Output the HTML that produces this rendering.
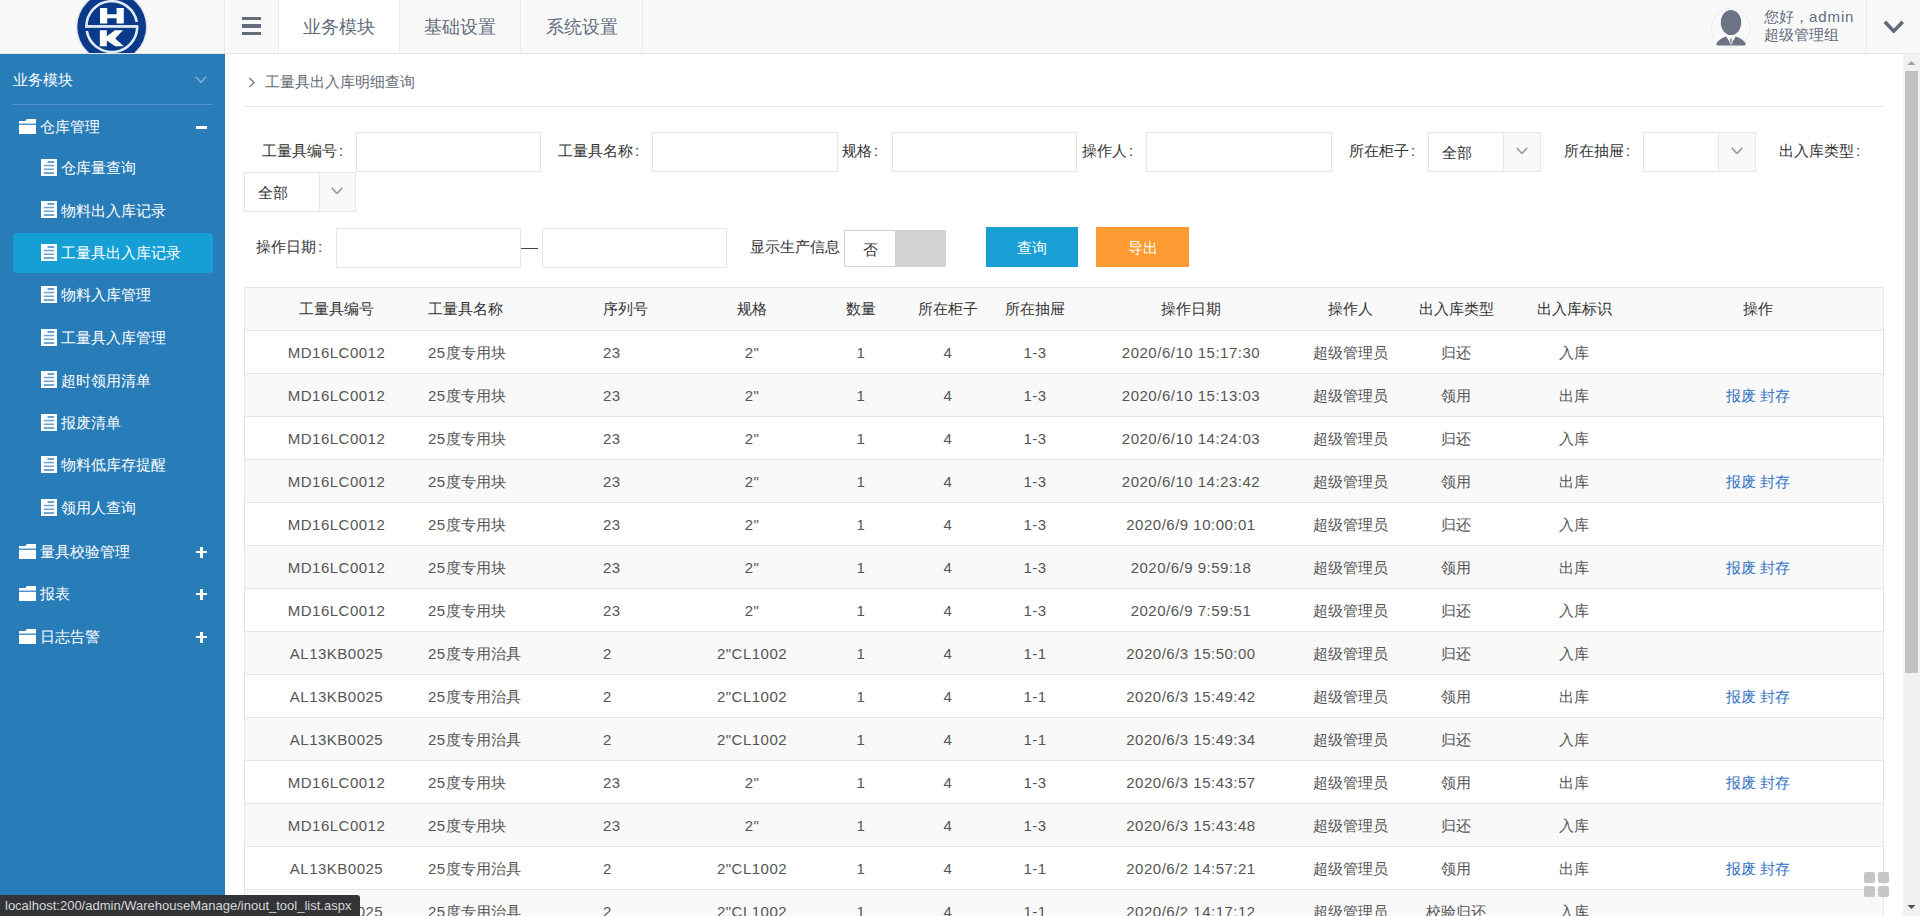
<!DOCTYPE html><html><head><meta charset="utf-8"><style>
*{box-sizing:border-box;margin:0;padding:0}
html,body{width:1920px;height:916px;overflow:hidden;background:#fff;font-family:"Liberation Sans",sans-serif;font-size:15px;color:#333}
.a{position:absolute;white-space:nowrap}
#top{position:absolute;left:0;top:0;width:1920px;height:54px;background:#f9f9f9;border-bottom:1px solid #e6e6e6}
.vsep{position:absolute;top:0;width:1px;height:53px;background:#ebebeb}
.tab{position:absolute;top:1px;height:53px;line-height:53px;font-size:18px;color:#646c7d;text-align:center}
#side{position:absolute;left:0;top:54px;width:225px;height:862px;background:#287cb8}
.mi{position:absolute;margin-top:1px;white-space:nowrap;font-size:15px;line-height:20px;color:#fff}
#sb{position:absolute;left:1903px;top:54px;width:17px;height:862px;background:#f1f1f1}
.lbl{position:absolute;white-space:nowrap;color:#333;font-size:15px;line-height:20px}
.inp{position:absolute;border:1px solid #e6e6e6;background:#fff;height:40px}
.sel{position:absolute;border:1px solid #e6e6e6;background:#fff;height:40px}
.sel .arr{position:absolute;right:0;top:0;width:36px;height:38px;background:#f9f9f9;border-left:1px solid #e6e6e6}
.row{position:absolute;left:244px;width:1640px;height:43px;border-left:1px solid #e6e6e6;border-right:1px solid #e6e6e6;border-bottom:1px solid #e6e6e6}
.c{position:absolute;top:1px;height:42px;line-height:42px;white-space:nowrap;color:#555}
.ls{letter-spacing:0.5px}
.cc{width:300px;text-align:center}
.h .c{color:#333;top:0}
.lk{color:#3372c4}
.co{margin-left:2px}
</style></head><body><div id="top">
<div class="vsep" style="left:224px"></div>
<div class="vsep" style="left:278px"></div>
<div class="vsep" style="left:399px"></div>
<div class="vsep" style="left:520px"></div>
<div class="vsep" style="left:642px"></div>
<div class="vsep" style="left:1866px"></div>
<div class="a" style="left:279px;top:0;width:120px;height:53px;background:#fff"></div>
<div class="tab" style="left:279px;width:120px">业务模块</div>
<div class="tab" style="left:400px;width:120px">基础设置</div>
<div class="tab" style="left:521px;width:121px">系统设置</div>
<div class="a" style="left:242px;top:16.5px;width:19px;height:3.5px;background:#646c7d"></div>
<div class="a" style="left:242px;top:24px;width:19px;height:3.5px;background:#646c7d"></div>
<div class="a" style="left:242px;top:31.5px;width:19px;height:3.5px;background:#646c7d"></div>
<svg class="a" style="left:0;top:0" width="224" height="53" viewBox="0 0 224 53">
<circle cx="111.7" cy="26.8" r="35.8" fill="#dde4ec"/>
<circle cx="111.7" cy="26.8" r="34.4" fill="#0a3a89"/>
<path d="M86.4 26.6 A25.4 25.4 0 0 1 136.78 22.0" fill="none" stroke="#e3ecf5" stroke-width="2.6"/>
<path d="M137.2 26.6 A25.4 25.4 0 0 1 86.78 31.0" fill="none" stroke="#e3ecf5" stroke-width="2.6"/>
<rect x="85.1" y="25" width="53.1" height="2.9" fill="#d9e3ee"/>
<path d="M100 8h7.2v6.2h9.4v-6.2h7.2v15.4h-7.2v-5.1h-9.4v5.1h-7.2z" fill="#fff"/>
<path d="M99.85 30.3H106.8V36.2L114.9 30.3H123L115.2 38.6L123.8 46.2H115.2L106.8 40.4V46.2H99.85Z" fill="#fff"/>
</svg>
<svg class="a" style="left:1711px;top:8px" width="40" height="40" viewBox="0 0 40 40">
<circle cx="20" cy="20" r="19.5" fill="#f9f9f9" stroke="#ececec" stroke-width="1"/>
<ellipse cx="20" cy="14.5" rx="10.2" ry="12.6" fill="#6b7385"/>
<path d="M5 36.2 C7 32 10.5 30 15.2 28.4 L20 36 L24.8 28.4 C29.5 30 33 32 35 36.2 L33.5 37.4 H6.5z" fill="#6b7385"/>
<path d="M18.9 30.2 h2.2 l-0.2 5.6 h-1.8z" fill="#6b7385" stroke="#f9f9f9" stroke-width="0.7"/>
</svg>
<div class="a" style="left:1764px;top:8px;font-size:15px;line-height:18px;color:#646c7d">您好，<span style="letter-spacing:0.9px">admin</span><br>超级管理组</div>
<svg class="a" style="left:1882.5px;top:19.8px" width="21.5" height="13" viewBox="0 0 21.5 13"><polyline points="1.8,1.8 10.75,11.2 19.7,1.8" fill="none" stroke="#646c7d" stroke-width="3.6"/></svg>
</div>
<div id="side">
</div>
<div class="mi" style="left:13px;top:69px">业务模块</div>
<svg class="a" style="left:194.5px;top:75.5px" width="12" height="7" viewBox="0 0 12 7"><polyline points="0.8,0.8 6.0,6.2 11.2,0.8" fill="none" stroke="#7fb0d9" stroke-width="1.6"/></svg>
<div class="a" style="left:13px;top:104px;width:200px;height:1px;background:#4f93c6"></div>
<div class="a" style="left:13px;top:233px;width:200px;height:40px;background:#169fd5;border-radius:4px"></div>
<svg class="a" style="left:19px;top:119px" width="17" height="15" viewBox="0 0 17 15"><path d="M0 2h6.5l1.2-2h9.3v15h-17z" fill="#fff"/><rect x="0" y="4.6" width="17" height="1.2" fill="#287cb8"/></svg>
<div class="mi" style="left:40px;top:116px">仓库管理</div>
<div class="a" style="left:196px;top:126px;width:11px;height:2.5px;background:#fff"></div>
<svg class="a" style="left:41px;top:159px" width="16" height="17" viewBox="0 0 16 17"><rect width="16" height="17" fill="#fff"/><rect x="6.5" y="2" width="6.6" height="2" fill="#6ca2cf"/><rect x="2.8" y="5.8" width="10.3" height="1.5" fill="#6ca2cf"/><rect x="2.8" y="9.5" width="10.3" height="1.5" fill="#6ca2cf"/><rect x="2.8" y="13.1" width="10.3" height="1.9" fill="#6ca2cf"/></svg>
<div class="mi" style="left:61px;top:157px">仓库量查询</div>
<svg class="a" style="left:41px;top:201px" width="16" height="17" viewBox="0 0 16 17"><rect width="16" height="17" fill="#fff"/><rect x="6.5" y="2" width="6.6" height="2" fill="#6ca2cf"/><rect x="2.8" y="5.8" width="10.3" height="1.5" fill="#6ca2cf"/><rect x="2.8" y="9.5" width="10.3" height="1.5" fill="#6ca2cf"/><rect x="2.8" y="13.1" width="10.3" height="1.9" fill="#6ca2cf"/></svg>
<div class="mi" style="left:61px;top:200px">物料出入库记录</div>
<svg class="a" style="left:41px;top:244px" width="16" height="17" viewBox="0 0 16 17"><rect width="16" height="17" fill="#fff"/><rect x="6.5" y="2" width="6.6" height="2" fill="#6ca2cf"/><rect x="2.8" y="5.8" width="10.3" height="1.5" fill="#6ca2cf"/><rect x="2.8" y="9.5" width="10.3" height="1.5" fill="#6ca2cf"/><rect x="2.8" y="13.1" width="10.3" height="1.9" fill="#6ca2cf"/></svg>
<div class="mi" style="left:61px;top:242px">工量具出入库记录</div>
<svg class="a" style="left:41px;top:286px" width="16" height="17" viewBox="0 0 16 17"><rect width="16" height="17" fill="#fff"/><rect x="6.5" y="2" width="6.6" height="2" fill="#6ca2cf"/><rect x="2.8" y="5.8" width="10.3" height="1.5" fill="#6ca2cf"/><rect x="2.8" y="9.5" width="10.3" height="1.5" fill="#6ca2cf"/><rect x="2.8" y="13.1" width="10.3" height="1.9" fill="#6ca2cf"/></svg>
<div class="mi" style="left:61px;top:284px">物料入库管理</div>
<svg class="a" style="left:41px;top:329px" width="16" height="17" viewBox="0 0 16 17"><rect width="16" height="17" fill="#fff"/><rect x="6.5" y="2" width="6.6" height="2" fill="#6ca2cf"/><rect x="2.8" y="5.8" width="10.3" height="1.5" fill="#6ca2cf"/><rect x="2.8" y="9.5" width="10.3" height="1.5" fill="#6ca2cf"/><rect x="2.8" y="13.1" width="10.3" height="1.9" fill="#6ca2cf"/></svg>
<div class="mi" style="left:61px;top:327px">工量具入库管理</div>
<svg class="a" style="left:41px;top:371px" width="16" height="17" viewBox="0 0 16 17"><rect width="16" height="17" fill="#fff"/><rect x="6.5" y="2" width="6.6" height="2" fill="#6ca2cf"/><rect x="2.8" y="5.8" width="10.3" height="1.5" fill="#6ca2cf"/><rect x="2.8" y="9.5" width="10.3" height="1.5" fill="#6ca2cf"/><rect x="2.8" y="13.1" width="10.3" height="1.9" fill="#6ca2cf"/></svg>
<div class="mi" style="left:61px;top:370px">超时领用清单</div>
<svg class="a" style="left:41px;top:414px" width="16" height="17" viewBox="0 0 16 17"><rect width="16" height="17" fill="#fff"/><rect x="6.5" y="2" width="6.6" height="2" fill="#6ca2cf"/><rect x="2.8" y="5.8" width="10.3" height="1.5" fill="#6ca2cf"/><rect x="2.8" y="9.5" width="10.3" height="1.5" fill="#6ca2cf"/><rect x="2.8" y="13.1" width="10.3" height="1.9" fill="#6ca2cf"/></svg>
<div class="mi" style="left:61px;top:412px">报废清单</div>
<svg class="a" style="left:41px;top:456px" width="16" height="17" viewBox="0 0 16 17"><rect width="16" height="17" fill="#fff"/><rect x="6.5" y="2" width="6.6" height="2" fill="#6ca2cf"/><rect x="2.8" y="5.8" width="10.3" height="1.5" fill="#6ca2cf"/><rect x="2.8" y="9.5" width="10.3" height="1.5" fill="#6ca2cf"/><rect x="2.8" y="13.1" width="10.3" height="1.9" fill="#6ca2cf"/></svg>
<div class="mi" style="left:61px;top:454px">物料低库存提醒</div>
<svg class="a" style="left:41px;top:499px" width="16" height="17" viewBox="0 0 16 17"><rect width="16" height="17" fill="#fff"/><rect x="6.5" y="2" width="6.6" height="2" fill="#6ca2cf"/><rect x="2.8" y="5.8" width="10.3" height="1.5" fill="#6ca2cf"/><rect x="2.8" y="9.5" width="10.3" height="1.5" fill="#6ca2cf"/><rect x="2.8" y="13.1" width="10.3" height="1.9" fill="#6ca2cf"/></svg>
<div class="mi" style="left:61px;top:497px">领用人查询</div>
<svg class="a" style="left:19px;top:544px" width="17" height="15" viewBox="0 0 17 15"><path d="M0 2h6.5l1.2-2h9.3v15h-17z" fill="#fff"/><rect x="0" y="4.6" width="17" height="1.2" fill="#287cb8"/></svg>
<div class="mi" style="left:40px;top:541px">量具校验管理</div>
<div class="a" style="left:196px;top:550.75px;width:11px;height:2.5px;background:#fff"></div>
<div class="a" style="left:200.25px;top:546.5px;width:2.5px;height:11px;background:#fff"></div>
<svg class="a" style="left:19px;top:586px" width="17" height="15" viewBox="0 0 17 15"><path d="M0 2h6.5l1.2-2h9.3v15h-17z" fill="#fff"/><rect x="0" y="4.6" width="17" height="1.2" fill="#287cb8"/></svg>
<div class="mi" style="left:40px;top:583px">报表</div>
<div class="a" style="left:196px;top:592.75px;width:11px;height:2.5px;background:#fff"></div>
<div class="a" style="left:200.25px;top:588.5px;width:2.5px;height:11px;background:#fff"></div>
<svg class="a" style="left:19px;top:629px" width="17" height="15" viewBox="0 0 17 15"><path d="M0 2h6.5l1.2-2h9.3v15h-17z" fill="#fff"/><rect x="0" y="4.6" width="17" height="1.2" fill="#287cb8"/></svg>
<div class="mi" style="left:40px;top:626px">日志告警</div>
<div class="a" style="left:196px;top:635.75px;width:11px;height:2.5px;background:#fff"></div>
<div class="a" style="left:200.25px;top:631.5px;width:2.5px;height:11px;background:#fff"></div>
<svg class="a" style="left:248px;top:77px" width="8" height="11" viewBox="0 0 8 11"><polyline points="1.5,1 6,5.5 1.5,10" fill="none" stroke="#777" stroke-width="1.4"/></svg>
<div class="a" style="left:265px;top:72px;color:#666a75;font-size:15px;line-height:20px">工量具出入库明细查询</div>
<div class="a" style="left:244px;top:106px;width:1640px;height:1px;background:#e8e8e8"></div>
<div class="lbl" style="left:262px;top:141px">工量具编号<span class=co>:</span></div>
<div class="inp" style="left:356px;top:132px;width:185px"></div>
<div class="lbl" style="left:558px;top:141px">工量具名称<span class=co>:</span></div>
<div class="inp" style="left:652px;top:132px;width:186px"></div>
<div class="lbl" style="left:842px;top:141px">规格<span class=co>:</span></div>
<div class="inp" style="left:892px;top:132px;width:185px"></div>
<div class="lbl" style="left:1082px;top:141px">操作人<span class=co>:</span></div>
<div class="inp" style="left:1146px;top:132px;width:186px"></div>
<div class="lbl" style="left:1349px;top:141px">所在柜子<span class=co>:</span></div>
<div class="sel" style="left:1428px;top:132px;width:113px"><div class="a" style="left:13px;top:10px;color:#333;line-height:20px">全部</div><div class="arr" style="width:37px"></div></div>
<svg class="a" style="left:1515.5px;top:146.5px" width="12" height="7.5" viewBox="0 0 12 7.5"><polyline points="0.85,0.85 6.0,6.65 11.15,0.85" fill="none" stroke="#a0a0a0" stroke-width="1.7"/></svg>
<div class="lbl" style="left:1564px;top:141px">所在抽屉<span class=co>:</span></div>
<div class="sel" style="left:1643px;top:132px;width:113px"><div class="a" style="left:13px;top:10px;color:#333;line-height:20px"></div><div class="arr" style="width:37px"></div></div>
<svg class="a" style="left:1730.5px;top:146.5px" width="12" height="7.5" viewBox="0 0 12 7.5"><polyline points="0.85,0.85 6.0,6.65 11.15,0.85" fill="none" stroke="#a0a0a0" stroke-width="1.7"/></svg>
<div class="lbl" style="left:1779px;top:141px">出入库类型<span class=co>:</span></div>
<div class="sel" style="left:244px;top:172px;width:112px"><div class="a" style="left:13px;top:10px;color:#333;line-height:20px">全部</div><div class="arr" style="width:36px"></div></div>
<svg class="a" style="left:331.0px;top:186.5px" width="12" height="7.5" viewBox="0 0 12 7.5"><polyline points="0.85,0.85 6.0,6.65 11.15,0.85" fill="none" stroke="#a0a0a0" stroke-width="1.7"/></svg>
<div class="lbl" style="left:256px;top:237px">操作日期<span class=co>:</span></div>
<div class="inp" style="left:336px;top:228px;width:185px"></div>
<div class="a" style="left:521px;top:248px;width:17px;height:1px;background:#444"></div>
<div class="inp" style="left:542px;top:228px;width:185px"></div>
<div class="lbl" style="left:750px;top:237px">显示生产信息</div>
<div class="a" style="left:844px;top:230px;width:102px;height:37px;background:#d2d2d2;border:1px solid #d2d2d2"></div>
<div class="a" style="left:845px;top:231px;width:50px;height:35px;background:#fff;text-align:center;line-height:37px;color:#333">否</div>
<div class="a" style="left:986px;top:227px;width:92px;height:40px;background:#1a9fd4;color:#fff;text-align:center;line-height:42px">查询</div>
<div class="a" style="left:1096px;top:227px;width:93px;height:40px;background:#fd9a31;color:#fff;text-align:center;line-height:42px">导出</div>
<div class="row h" style="top:287px;height:44px;border-top:1px solid #e6e6e6;background:#f9f9f9"><div class="c cc" style="left:-58.5px">工量具编号</div><div class="c" style="left:183px">工量具名称</div><div class="c" style="left:358px">序列号</div><div class="c cc" style="left:357px">规格</div><div class="c cc" style="left:466px">数量</div><div class="c cc" style="left:553px">所在柜子</div><div class="c cc" style="left:640px">所在抽屉</div><div class="c cc" style="left:796px">操作日期</div><div class="c cc" style="left:955px">操作人</div><div class="c cc" style="left:1061px">出入库类型</div><div class="c cc" style="left:1179px">出入库标识</div><div class="c cc" style="left:1363px">操作</div></div>
<div class="row" style="top:331px;background:#fff"><div class="c cc" style="left:-58.5px"><span class="ls">MD16LC0012</span></div><div class="c" style="left:183px"><span class="ls">25</span>度专用块</div><div class="c" style="left:358px"><span class="ls">23</span></div><div class="c cc" style="left:357px"><span class="ls">2"</span></div><div class="c cc" style="left:466px"><span class="ls">1</span></div><div class="c cc" style="left:553px"><span class="ls">4</span></div><div class="c cc" style="left:640px"><span class="ls">1-3</span></div><div class="c cc" style="left:796px"><span class="ls">2020/6/10 15:17:30</span></div><div class="c cc" style="left:955px">超级管理员</div><div class="c cc" style="left:1061px">归还</div><div class="c cc" style="left:1179px">入库</div></div>
<div class="row" style="top:374px;background:#f9f9f9"><div class="c cc" style="left:-58.5px"><span class="ls">MD16LC0012</span></div><div class="c" style="left:183px"><span class="ls">25</span>度专用块</div><div class="c" style="left:358px"><span class="ls">23</span></div><div class="c cc" style="left:357px"><span class="ls">2"</span></div><div class="c cc" style="left:466px"><span class="ls">1</span></div><div class="c cc" style="left:553px"><span class="ls">4</span></div><div class="c cc" style="left:640px"><span class="ls">1-3</span></div><div class="c cc" style="left:796px"><span class="ls">2020/6/10 15:13:03</span></div><div class="c cc" style="left:955px">超级管理员</div><div class="c cc" style="left:1061px">领用</div><div class="c cc" style="left:1179px">出库</div><div class="c cc" style="left:1363px"><span class="lk">报废 封存</span></div></div>
<div class="row" style="top:417px;background:#fff"><div class="c cc" style="left:-58.5px"><span class="ls">MD16LC0012</span></div><div class="c" style="left:183px"><span class="ls">25</span>度专用块</div><div class="c" style="left:358px"><span class="ls">23</span></div><div class="c cc" style="left:357px"><span class="ls">2"</span></div><div class="c cc" style="left:466px"><span class="ls">1</span></div><div class="c cc" style="left:553px"><span class="ls">4</span></div><div class="c cc" style="left:640px"><span class="ls">1-3</span></div><div class="c cc" style="left:796px"><span class="ls">2020/6/10 14:24:03</span></div><div class="c cc" style="left:955px">超级管理员</div><div class="c cc" style="left:1061px">归还</div><div class="c cc" style="left:1179px">入库</div></div>
<div class="row" style="top:460px;background:#f9f9f9"><div class="c cc" style="left:-58.5px"><span class="ls">MD16LC0012</span></div><div class="c" style="left:183px"><span class="ls">25</span>度专用块</div><div class="c" style="left:358px"><span class="ls">23</span></div><div class="c cc" style="left:357px"><span class="ls">2"</span></div><div class="c cc" style="left:466px"><span class="ls">1</span></div><div class="c cc" style="left:553px"><span class="ls">4</span></div><div class="c cc" style="left:640px"><span class="ls">1-3</span></div><div class="c cc" style="left:796px"><span class="ls">2020/6/10 14:23:42</span></div><div class="c cc" style="left:955px">超级管理员</div><div class="c cc" style="left:1061px">领用</div><div class="c cc" style="left:1179px">出库</div><div class="c cc" style="left:1363px"><span class="lk">报废 封存</span></div></div>
<div class="row" style="top:503px;background:#fff"><div class="c cc" style="left:-58.5px"><span class="ls">MD16LC0012</span></div><div class="c" style="left:183px"><span class="ls">25</span>度专用块</div><div class="c" style="left:358px"><span class="ls">23</span></div><div class="c cc" style="left:357px"><span class="ls">2"</span></div><div class="c cc" style="left:466px"><span class="ls">1</span></div><div class="c cc" style="left:553px"><span class="ls">4</span></div><div class="c cc" style="left:640px"><span class="ls">1-3</span></div><div class="c cc" style="left:796px"><span class="ls">2020/6/9 10:00:01</span></div><div class="c cc" style="left:955px">超级管理员</div><div class="c cc" style="left:1061px">归还</div><div class="c cc" style="left:1179px">入库</div></div>
<div class="row" style="top:546px;background:#f9f9f9"><div class="c cc" style="left:-58.5px"><span class="ls">MD16LC0012</span></div><div class="c" style="left:183px"><span class="ls">25</span>度专用块</div><div class="c" style="left:358px"><span class="ls">23</span></div><div class="c cc" style="left:357px"><span class="ls">2"</span></div><div class="c cc" style="left:466px"><span class="ls">1</span></div><div class="c cc" style="left:553px"><span class="ls">4</span></div><div class="c cc" style="left:640px"><span class="ls">1-3</span></div><div class="c cc" style="left:796px"><span class="ls">2020/6/9 9:59:18</span></div><div class="c cc" style="left:955px">超级管理员</div><div class="c cc" style="left:1061px">领用</div><div class="c cc" style="left:1179px">出库</div><div class="c cc" style="left:1363px"><span class="lk">报废 封存</span></div></div>
<div class="row" style="top:589px;background:#fff"><div class="c cc" style="left:-58.5px"><span class="ls">MD16LC0012</span></div><div class="c" style="left:183px"><span class="ls">25</span>度专用块</div><div class="c" style="left:358px"><span class="ls">23</span></div><div class="c cc" style="left:357px"><span class="ls">2"</span></div><div class="c cc" style="left:466px"><span class="ls">1</span></div><div class="c cc" style="left:553px"><span class="ls">4</span></div><div class="c cc" style="left:640px"><span class="ls">1-3</span></div><div class="c cc" style="left:796px"><span class="ls">2020/6/9 7:59:51</span></div><div class="c cc" style="left:955px">超级管理员</div><div class="c cc" style="left:1061px">归还</div><div class="c cc" style="left:1179px">入库</div></div>
<div class="row" style="top:632px;background:#f9f9f9"><div class="c cc" style="left:-58.5px"><span class="ls">AL13KB0025</span></div><div class="c" style="left:183px"><span class="ls">25</span>度专用治具</div><div class="c" style="left:358px"><span class="ls">2</span></div><div class="c cc" style="left:357px"><span class="ls">2"CL1002</span></div><div class="c cc" style="left:466px"><span class="ls">1</span></div><div class="c cc" style="left:553px"><span class="ls">4</span></div><div class="c cc" style="left:640px"><span class="ls">1-1</span></div><div class="c cc" style="left:796px"><span class="ls">2020/6/3 15:50:00</span></div><div class="c cc" style="left:955px">超级管理员</div><div class="c cc" style="left:1061px">归还</div><div class="c cc" style="left:1179px">入库</div></div>
<div class="row" style="top:675px;background:#fff"><div class="c cc" style="left:-58.5px"><span class="ls">AL13KB0025</span></div><div class="c" style="left:183px"><span class="ls">25</span>度专用治具</div><div class="c" style="left:358px"><span class="ls">2</span></div><div class="c cc" style="left:357px"><span class="ls">2"CL1002</span></div><div class="c cc" style="left:466px"><span class="ls">1</span></div><div class="c cc" style="left:553px"><span class="ls">4</span></div><div class="c cc" style="left:640px"><span class="ls">1-1</span></div><div class="c cc" style="left:796px"><span class="ls">2020/6/3 15:49:42</span></div><div class="c cc" style="left:955px">超级管理员</div><div class="c cc" style="left:1061px">领用</div><div class="c cc" style="left:1179px">出库</div><div class="c cc" style="left:1363px"><span class="lk">报废 封存</span></div></div>
<div class="row" style="top:718px;background:#f9f9f9"><div class="c cc" style="left:-58.5px"><span class="ls">AL13KB0025</span></div><div class="c" style="left:183px"><span class="ls">25</span>度专用治具</div><div class="c" style="left:358px"><span class="ls">2</span></div><div class="c cc" style="left:357px"><span class="ls">2"CL1002</span></div><div class="c cc" style="left:466px"><span class="ls">1</span></div><div class="c cc" style="left:553px"><span class="ls">4</span></div><div class="c cc" style="left:640px"><span class="ls">1-1</span></div><div class="c cc" style="left:796px"><span class="ls">2020/6/3 15:49:34</span></div><div class="c cc" style="left:955px">超级管理员</div><div class="c cc" style="left:1061px">归还</div><div class="c cc" style="left:1179px">入库</div></div>
<div class="row" style="top:761px;background:#fff"><div class="c cc" style="left:-58.5px"><span class="ls">MD16LC0012</span></div><div class="c" style="left:183px"><span class="ls">25</span>度专用块</div><div class="c" style="left:358px"><span class="ls">23</span></div><div class="c cc" style="left:357px"><span class="ls">2"</span></div><div class="c cc" style="left:466px"><span class="ls">1</span></div><div class="c cc" style="left:553px"><span class="ls">4</span></div><div class="c cc" style="left:640px"><span class="ls">1-3</span></div><div class="c cc" style="left:796px"><span class="ls">2020/6/3 15:43:57</span></div><div class="c cc" style="left:955px">超级管理员</div><div class="c cc" style="left:1061px">领用</div><div class="c cc" style="left:1179px">出库</div><div class="c cc" style="left:1363px"><span class="lk">报废 封存</span></div></div>
<div class="row" style="top:804px;background:#f9f9f9"><div class="c cc" style="left:-58.5px"><span class="ls">MD16LC0012</span></div><div class="c" style="left:183px"><span class="ls">25</span>度专用块</div><div class="c" style="left:358px"><span class="ls">23</span></div><div class="c cc" style="left:357px"><span class="ls">2"</span></div><div class="c cc" style="left:466px"><span class="ls">1</span></div><div class="c cc" style="left:553px"><span class="ls">4</span></div><div class="c cc" style="left:640px"><span class="ls">1-3</span></div><div class="c cc" style="left:796px"><span class="ls">2020/6/3 15:43:48</span></div><div class="c cc" style="left:955px">超级管理员</div><div class="c cc" style="left:1061px">归还</div><div class="c cc" style="left:1179px">入库</div></div>
<div class="row" style="top:847px;background:#fff"><div class="c cc" style="left:-58.5px"><span class="ls">AL13KB0025</span></div><div class="c" style="left:183px"><span class="ls">25</span>度专用治具</div><div class="c" style="left:358px"><span class="ls">2</span></div><div class="c cc" style="left:357px"><span class="ls">2"CL1002</span></div><div class="c cc" style="left:466px"><span class="ls">1</span></div><div class="c cc" style="left:553px"><span class="ls">4</span></div><div class="c cc" style="left:640px"><span class="ls">1-1</span></div><div class="c cc" style="left:796px"><span class="ls">2020/6/2 14:57:21</span></div><div class="c cc" style="left:955px">超级管理员</div><div class="c cc" style="left:1061px">领用</div><div class="c cc" style="left:1179px">出库</div><div class="c cc" style="left:1363px"><span class="lk">报废 封存</span></div></div>
<div class="row" style="top:890px;background:#f9f9f9"><div class="c cc" style="left:-58.5px"><span class="ls">AL13KB0025</span></div><div class="c" style="left:183px"><span class="ls">25</span>度专用治具</div><div class="c" style="left:358px"><span class="ls">2</span></div><div class="c cc" style="left:357px"><span class="ls">2"CL1002</span></div><div class="c cc" style="left:466px"><span class="ls">1</span></div><div class="c cc" style="left:553px"><span class="ls">4</span></div><div class="c cc" style="left:640px"><span class="ls">1-1</span></div><div class="c cc" style="left:796px"><span class="ls">2020/6/2 14:17:12</span></div><div class="c cc" style="left:955px">超级管理员</div><div class="c cc" style="left:1061px">校验归还</div><div class="c cc" style="left:1179px">入库</div></div>
<div id="sb"></div>
<svg class="a" style="left:1903px;top:54px" width="17" height="862" viewBox="0 0 17 862"><polygon points="4.5,11 12.5,11 8.5,7" fill="#a3a3a3"/><rect x="2" y="17" width="13" height="602" fill="#c1c1c1"/><polygon points="4.5,851 12.5,851 8.5,855" fill="#505050"/></svg>
<svg class="a" style="left:1864px;top:872px" width="25" height="25" viewBox="0 0 25 25" fill="#c6c6c7"><rect x="0" y="0" width="11" height="11" rx="2"/><rect x="14" y="0" width="11" height="11" rx="2"/><rect x="0" y="14" width="11" height="11" rx="2"/><rect x="14" y="14" width="11" height="11" rx="2"/></svg>
<div class="a" style="left:0;top:895px;width:360px;height:21px;background:#333438;border-top-right-radius:3px;color:#d8d8d8;font-size:13px;line-height:21px;padding-left:5px">localhost:200/admin/WarehouseManage/inout_tool_list.aspx</div></body></html>
